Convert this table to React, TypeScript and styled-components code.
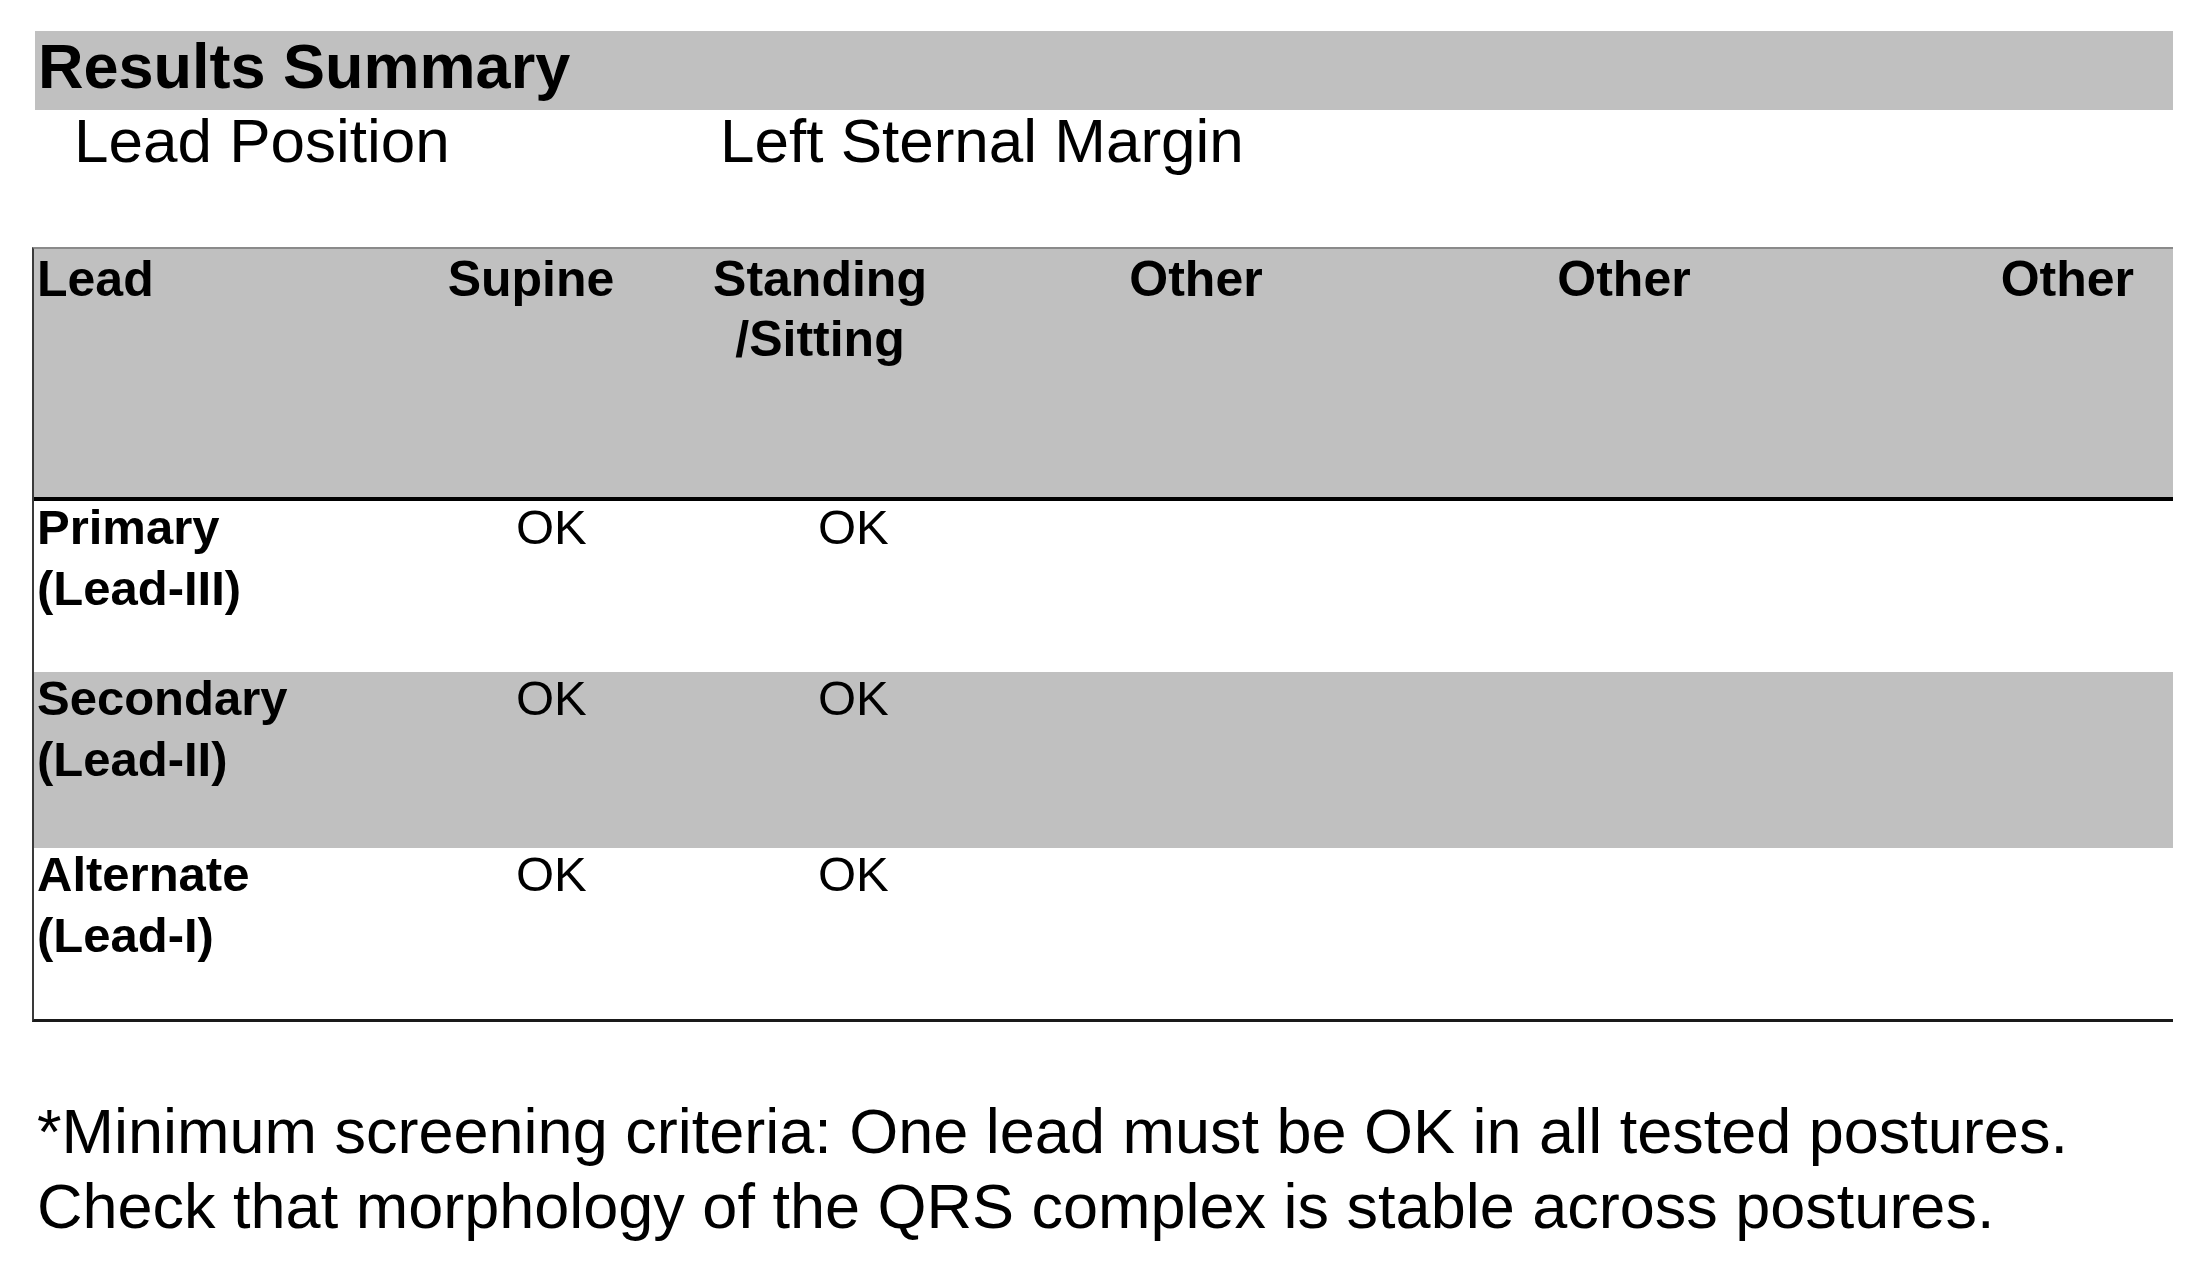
import styled, { createGlobalStyle } from 'styled-components';

const GlobalStyle = createGlobalStyle`
  body {
    margin: 0;
    background: #ffffff;
    font-family: "Liberation Sans", Arial, sans-serif;
    color: #000;
  }
`;

const COLUMNS = '368px 258px 320px 432px 424px 337px';

type Row = { label: string; sub: string; supine: string; standing: string; shaded: boolean; height: number };

const rows: Row[] = [
  { label: 'Primary', sub: '(Lead-III)', supine: 'OK', standing: 'OK', shaded: false, height: 171 },
  { label: 'Secondary', sub: '(Lead-II)', supine: 'OK', standing: 'OK', shaded: true, height: 176 },
  { label: 'Alternate', sub: '(Lead-I)', supine: 'OK', standing: 'OK', shaded: false, height: 171 },
];

const App = () => {
  return (
    <Page>
      <GlobalStyle />
      <TitleBar>Results Summary</TitleBar>
      <InfoRow>
        <span>Lead Position</span>
        <span>Left Sternal Margin</span>
      </InfoRow>

      <Table>
        <HeaderRow>
          <HeadCell $align="left">Lead</HeadCell>
          <HeadCell $align="center">Supine</HeadCell>
          <HeadCell $align="center">Standing<br />/Sitting</HeadCell>
          <HeadCell $align="center">Other</HeadCell>
          <HeadCell $align="center">Other</HeadCell>
          <HeadCell $align="right">Other</HeadCell>
        </HeaderRow>
        {rows.map((r) => (
          <BodyRow key={r.label} $shaded={r.shaded} $height={r.height}>
            <LabelCell>{r.label}<br />{r.sub}</LabelCell>
            <ValueCell $indent={114}>{r.supine}</ValueCell>
            <ValueCell $indent={158}>{r.standing}</ValueCell>
            <ValueCell $indent={0} />
            <ValueCell $indent={0} />
            <ValueCell $indent={0} />
          </BodyRow>
        ))}
      </Table>

      <Footnote>
        *Minimum screening criteria: One lead must be OK in all tested postures.<br />
        Check that morphology of the QRS complex is stable across postures.
      </Footnote>
    </Page>
  );
};

export default App;

const Page = styled.div`
  width: 2204px;
  padding-top: 31px;
`;

const TitleBar = styled.div`
  box-sizing: border-box;
  margin-left: 35px;
  width: 2138px;
  height: 79px;
  padding-left: 3px;
  background: #c0c0c0;
  font-size: 63px;
  font-weight: 700;
  line-height: 70px;
`;

const InfoRow = styled.div`
  display: grid;
  grid-template-columns: 646px auto;
  padding-left: 74px;
  font-size: 62px;
  line-height: 62px;
  height: 62px;
`;

const Table = styled.div`
  margin-top: 75px;
  margin-left: 32px;
  width: 2141px;
  box-sizing: border-box;
  border-left: 2px solid #3a3a3a;
  border-top: 2px solid #8a8a8a;
  border-bottom: 3px solid #1a1a1a;
`;

const HeaderRow = styled.div`
  display: grid;
  grid-template-columns: ${COLUMNS};
  height: 248px;
  background: #c0c0c0;
  border-bottom: 4px solid #000;
`;

const HeadCell = styled.div<{ $align: 'left' | 'center' | 'right' }>`
  font-size: 50px;
  font-weight: 700;
  line-height: 60px;
  text-align: ${(p) => p.$align};
  padding-left: ${(p) => (p.$align === 'left' ? '3px' : '0')};
  padding-right: ${(p) => (p.$align === 'right' ? '39px' : '0')};
`;

const BodyRow = styled.div<{ $shaded: boolean; $height: number }>`
  display: grid;
  grid-template-columns: ${COLUMNS};
  height: ${(p) => p.$height}px;
  background: ${(p) => (p.$shaded ? '#c0c0c0' : '#ffffff')};
`;

const LabelCell = styled.div`
  font-size: 49px;
  font-weight: 700;
  line-height: 61px;
  padding-left: 3px;
  margin-top: -4px;
`;

const ValueCell = styled.div<{ $indent: number }>`
  font-size: 49px;
  line-height: 60px;
  padding-left: ${(p) => p.$indent}px;
  margin-top: -4px;
`;

const Footnote = styled.div`
  margin-top: 72px;
  margin-left: 37px;
  font-size: 63px;
  line-height: 75px;
`;
